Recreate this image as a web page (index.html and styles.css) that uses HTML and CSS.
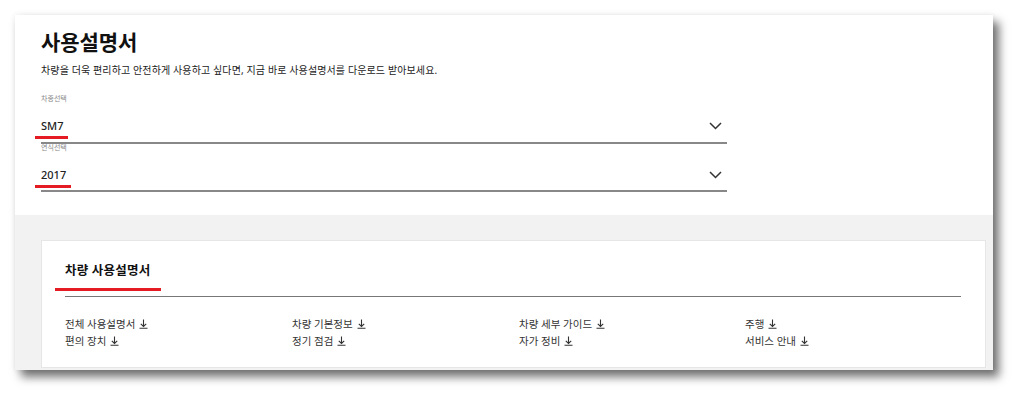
FILE: index.html
```html
<!DOCTYPE html>
<html lang="ko">
<head>
<meta charset="utf-8">
<title>사용설명서</title>
<link rel="stylesheet" href="styles.css">
</head>
<body>
<div class="frame">
  <section class="top">
    <h1 class="title">사용설명서</h1>
    <p class="subtitle">차량을 더욱 편리하고 안전하게 사용하고 싶다면, 지금 바로 사용설명서를 다운로드 받아보세요.</p>
    <div class="field">
      <div class="label">차종선택</div>
      <div class="select">
        <span class="value mark">SM7</span>
        <svg class="chev" width="13" height="8" viewBox="0 0 13 8"><polyline points="1,1 6.5,6.5 12,1" fill="none" stroke="#333" stroke-width="1.5"/></svg>
      </div>
    </div>
    <div class="field second">
      <div class="label">연식선택</div>
      <div class="select">
        <span class="value mark">2017</span>
        <svg class="chev" width="13" height="8" viewBox="0 0 13 8"><polyline points="1,1 6.5,6.5 12,1" fill="none" stroke="#333" stroke-width="1.5"/></svg>
      </div>
    </div>
  </section>
  <section class="bottom">
    <div class="card">
      <div class="card-head"><h2 class="card-title">차량 사용설명서</h2></div>
      <ul class="links">
        <li>전체 사용설명서 <svg class="dl" width="9" height="10" viewBox="0 0 9 10"><path d="M4.5 0.5v7M1.8 4.8l2.7 2.7 2.7-2.7M0.5 9.2h8" fill="none" stroke="#333" stroke-width="1.1"/></svg></li>
        <li>차량 기본정보 <svg class="dl" width="9" height="10" viewBox="0 0 9 10"><path d="M4.5 0.5v7M1.8 4.8l2.7 2.7 2.7-2.7M0.5 9.2h8" fill="none" stroke="#333" stroke-width="1.1"/></svg></li>
        <li>차량 세부 가이드 <svg class="dl" width="9" height="10" viewBox="0 0 9 10"><path d="M4.5 0.5v7M1.8 4.8l2.7 2.7 2.7-2.7M0.5 9.2h8" fill="none" stroke="#333" stroke-width="1.1"/></svg></li>
        <li>주행 <svg class="dl" width="9" height="10" viewBox="0 0 9 10"><path d="M4.5 0.5v7M1.8 4.8l2.7 2.7 2.7-2.7M0.5 9.2h8" fill="none" stroke="#333" stroke-width="1.1"/></svg></li>
        <li>편의 장치 <svg class="dl" width="9" height="10" viewBox="0 0 9 10"><path d="M4.5 0.5v7M1.8 4.8l2.7 2.7 2.7-2.7M0.5 9.2h8" fill="none" stroke="#333" stroke-width="1.1"/></svg></li>
        <li>정기 점검 <svg class="dl" width="9" height="10" viewBox="0 0 9 10"><path d="M4.5 0.5v7M1.8 4.8l2.7 2.7 2.7-2.7M0.5 9.2h8" fill="none" stroke="#333" stroke-width="1.1"/></svg></li>
        <li>자가 정비 <svg class="dl" width="9" height="10" viewBox="0 0 9 10"><path d="M4.5 0.5v7M1.8 4.8l2.7 2.7 2.7-2.7M0.5 9.2h8" fill="none" stroke="#333" stroke-width="1.1"/></svg></li>
        <li>서비스 안내 <svg class="dl" width="9" height="10" viewBox="0 0 9 10"><path d="M4.5 0.5v7M1.8 4.8l2.7 2.7 2.7-2.7M0.5 9.2h8" fill="none" stroke="#333" stroke-width="1.1"/></svg></li>
      </ul>
    </div>
  </section>
</div>
</body>
</html>
```
FILE: styles.css
```css
* { box-sizing: border-box; }
html { height: 100%; background: #fff; }
html, body { margin: 0; padding: 0; }
body {
  min-height: 401px;
  background: #fff;
  font-family: "Noto Sans", "Noto Sans CJK KR", sans-serif;
  color: #222;
  padding: 15px 0 0 15px;
}
.frame {
  width: 978px;
  background: #f2f2f2;
  box-shadow: 6px 7px 9px rgba(0,0,0,0.55), 0 0 6px rgba(0,0,0,0.08);
}
.top {
  background: #fff;
  padding: 13px 0 23px 26px;
}
.title {
  margin: 0;
  font-size: 21px;
  line-height: 28px;
  font-weight: 700;
  color: #111;
  letter-spacing: -0.1px;
}
.subtitle {
  margin: 6px 0 0;
  font-size: 10px;
  line-height: 16px;
  color: #222;
  letter-spacing: 0.12px;
}
.field { width: 686px; margin-top: 16px; }
.field.second { margin-top: 0; }
.label {
  font-size: 7px;
  line-height: 10px;
  color: #888;
}
.field.second .label { line-height: 8px; }
.select {
  display: flex;
  align-items: center;
  justify-content: space-between;
  margin-top: 14px;
  padding: 0 5px 8px 0;
  border-bottom: 2px solid #888;
}
.field.second .select { margin-top: 15px; padding-bottom: 7px; }
.value {
  font-size: 11px;
  line-height: 16px;
  color: #222;
  font-weight: 500;
}
.mark { position: relative; }
.mark::after {
  content: "";
  position: absolute;
  left: -6px;
  right: -5px;
  top: calc(100% + 2px);
  height: 2.5px;
  background: #e41b23;
}
.chev { display: block; }
.bottom {
  padding: 25px 7px 2px 26px;
}
.card {
  background: #fff;
  border: 1px solid #e6e6e6;
  padding: 21px 24px 17px 23px;
}
.card-head {
  display: flex;
  padding-bottom: 16px;
  border-bottom: 1.5px solid #777;
}
.card-title {
  position: relative;
  margin: 0;
  font-size: 12.5px;
  line-height: 18px;
  font-weight: 700;
  color: #111;
  letter-spacing: 0.2px;
}
.card-title::after {
  content: "";
  position: absolute;
  left: -10px;
  right: -11px;
  top: calc(100% + 8px);
  height: 3px;
  background: #e41b23;
}
.links {
  list-style: none;
  margin: 19px 0 0;
  padding: 0;
  display: grid;
  grid-template-columns: 227px 227px 226px 1fr;
}
.links li {
  display: flex;
  align-items: center;
  gap: 4px;
  height: 17px;
  font-size: 10.5px;
  line-height: 17px;
  color: #333;
  white-space: nowrap;
}
.dl { display: block; margin-top: -1px; }
```
